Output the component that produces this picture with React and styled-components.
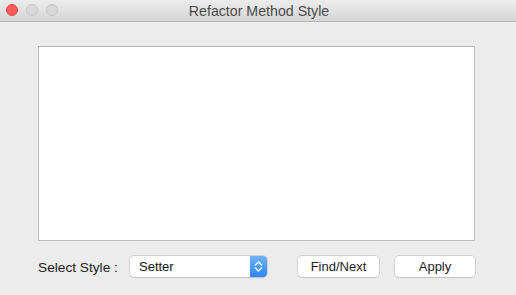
import React from "react";
import styled, { createGlobalStyle } from "styled-components";

const Global = createGlobalStyle`
  html, body { margin: 0; padding: 0; background: #ececec; }
  body { font-family: "Liberation Sans", Arial, sans-serif; }
`;

const Window = styled.div`
  width: 516px;
  height: 295px;
  background: #ececec;
  display: flex;
  flex-direction: column;
  overflow: hidden;
`;

const TitleBar = styled.div`
  position: relative;
  height: 21px;
  flex: none;
  background: linear-gradient(#ececec, #d6d6d6);
  border-bottom: 1px solid #b4b4b4;
  display: flex;
  align-items: center;
  justify-content: center;
`;

const Lights = styled.div`
  position: absolute;
  left: 6px;
  top: 4px;
  display: flex;
  gap: 8px;
`;

const Light = styled.span`
  width: 12px;
  height: 12px;
  box-sizing: border-box;
  border-radius: 50%;
  background: ${(p) => (p.$red ? "#fc5b57" : "#d8d8d8")};
  border: 1px solid ${(p) => (p.$red ? "#e2463f" : "#c4c4c4")};
`;

const Title = styled.div`
  font-size: 14.2px;
  color: #4c4c4c;
  margin-left: 2px;
  margin-top: 1px;
`;

const Content = styled.div`
  padding: 24px 41px 0 38px;
  display: flex;
  flex-direction: column;
`;

const TextArea = styled.div`
  height: 193px;
  background: #fff;
  border: 1px solid #c0c0c0;
  border-top-color: #b5b5b5;
`;

const Bottom = styled.div`
  margin-top: 14px;
  display: flex;
  align-items: center;
  height: 22px;
`;

const Label = styled.span`
  width: 92px;
  flex: none;
  font-size: 13.7px;
  color: #1e1e1e;
  margin-top: 2px;
  white-space: nowrap;
`;

const Popup = styled.div`
  width: 137px;
  height: 21px;
  box-sizing: border-box;
  display: flex;
  border-radius: 4px;
  background: #fff;
  box-shadow: 0 0 0 0.5px #b8b8b8, 0 1px 1px rgba(0, 0, 0, 0.12);
  overflow: hidden;
`;

const PopupText = styled.span`
  flex: 1;
  font-size: 13px;
  color: #111;
  padding-left: 9px;
  line-height: 21px;
`;

const Stepper = styled.div`
  width: 17px;
  background: linear-gradient(#6fb4fb, #2b88f7);
  display: flex;
  align-items: center;
  justify-content: center;
`;

const Button = styled.button`
  width: ${(p) => p.$w}px;
  height: 21px;
  margin-left: ${(p) => p.$ml}px;
  background: #fff;
  border: none;
  border-radius: 4px;
  box-shadow: 0 0 0 0.5px #b8b8b8, 0 1px 1px rgba(0, 0, 0, 0.12);
  font-family: "Liberation Sans", Arial, sans-serif;
  font-size: 13px;
  color: #1e1e1e;
  padding: 0;
  line-height: 21px;
`;

export default function App() {
  return (
    <>
      <Global />
      <Window>
        <TitleBar>
          <Lights>
            <Light $red />
            <Light />
            <Light />
          </Lights>
          <Title>Refactor Method Style</Title>
        </TitleBar>
        <Content>
          <TextArea />
          <Bottom>
            <Label>Select Style :</Label>
            <Popup>
              <PopupText>Setter</PopupText>
              <Stepper>
                <svg width="9" height="13" viewBox="0 0 9 13">
                  <path d="M1.5 5 L4.5 2 L7.5 5 M1.5 8 L4.5 11 L7.5 8" fill="none" stroke="#fff" strokeWidth="1.4" strokeLinecap="round" strokeLinejoin="round" />
                </svg>
              </Stepper>
            </Popup>
            <Button $w={81} $ml={31}>Find/Next</Button>
            <Button $w={80} $ml={16}>Apply</Button>
          </Bottom>
        </Content>
      </Window>
    </>
  );
}
